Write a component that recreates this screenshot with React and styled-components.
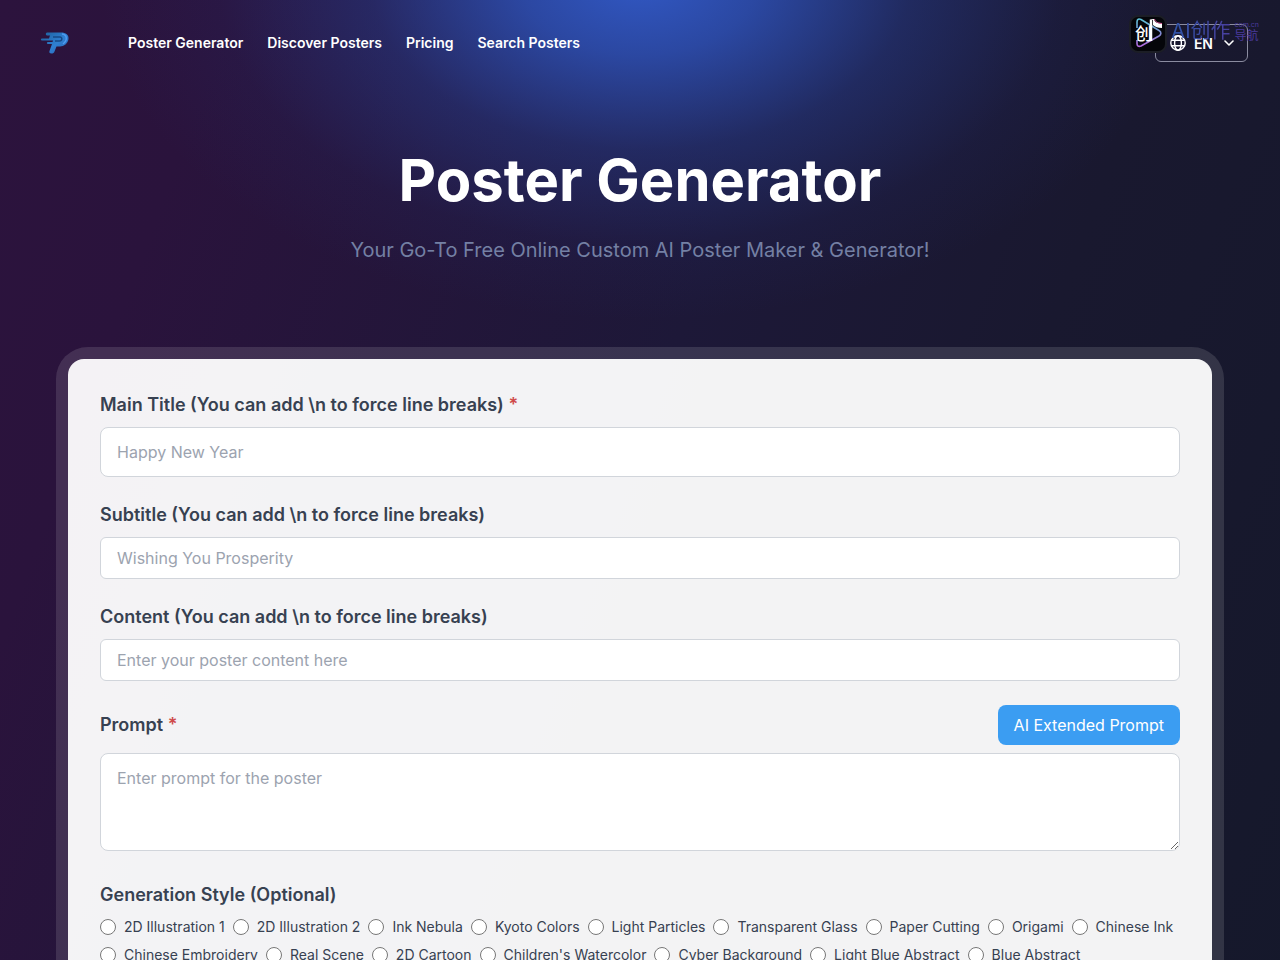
import React, { useState } from "react";
import styled, { createGlobalStyle } from "styled-components";

const navItems = ["Poster Generator", "Discover Posters", "Pricing", "Search Posters"];

const styleNames = [
  "2D Illustration 1",
  "2D Illustration 2",
  "Ink Nebula",
  "Kyoto Colors",
  "Light Particles",
  "Transparent Glass",
  "Paper Cutting",
  "Origami",
  "Chinese Ink",
  "Chinese Embroidery",
  "Real Scene",
  "2D Cartoon",
  "Children's Watercolor",
  "Cyber Background",
  "Light Blue Abstract",
  "Blue Abstract",
];

const Logo = () => (
  <svg width="30" height="24" viewBox="0 0 30 24" aria-hidden="true">
    <defs>
      <linearGradient id="logoFill" x1="0" y1="0" x2="1" y2="1">
        <stop offset="0" stopColor="#1d5f9c" />
        <stop offset="0.55" stopColor="#2f80d2" />
        <stop offset="1" stopColor="#2a5fb0" />
      </linearGradient>
    </defs>
    <path
      d="M7 1.500H21C26 1.500 29 4 28.500 8C28 12.500 24 15.500 20 15.500H16.500L14.500 20.500C14 22 13 22.500 11.500 22.500C9.500 22.500 9 21.500 9.500 20L12 13H8C6.500 13 6.500 11 8 11H12.500L13 9.500H2C0.500 9.500 0.500 7.500 2 7.500H9L10 4.500H7C5.500 4.500 5.500 1.500 7 1.500Z"
      fill="url(#logoFill)"
    />
    <path d="M13 6H20C22.500 6 22.500 10 19.500 10H15" fill="none" stroke="#174a86" strokeWidth="1.500" />
    <path d="M22 3C27 3.500 28 9 23 13" fill="none" stroke="#4f9cf0" strokeWidth="1.500" />
  </svg>
);

const GlobeIcon = () => (
  <svg width="16" height="16" viewBox="0 0 16 16" fill="none" stroke="#fff" strokeWidth="1.400" aria-hidden="true">
    <circle cx="8" cy="8" r="7.200" />
    <ellipse cx="8" cy="8" rx="3.400" ry="7.200" />
    <path d="M1.500 5.300H14.500M1.500 10.700H14.500" />
  </svg>
);

const ChevronIcon = () => (
  <svg width="10" height="6" viewBox="0 0 10 6" fill="none" stroke="#fff" strokeWidth="1.600" aria-hidden="true">
    <path d="M1 1L5 5L9 1" strokeLinecap="round" strokeLinejoin="round" />
  </svg>
);

const BadgeIcon = () => (
  <svg width="38" height="38" viewBox="0 0 38 38" aria-hidden="true">
    <defs>
      <linearGradient id="badgeLine" x1="0" y1="0" x2="0" y2="1">
        <stop offset="0" stopColor="#5fc4d8" />
        <stop offset="0.5" stopColor="#7c8bd0" />
        <stop offset="1" stopColor="#b56be0" />
      </linearGradient>
    </defs>
    <rect x="1" y="1" width="36" height="36" rx="8" fill="#05060a" stroke="#1c1e26" strokeWidth="2" />
    <path
      d="M8 13V7C8 4 10 3.500 12 4.500L30 15.500C32.500 17 32.500 19.500 30 21L12 31C9.500 32 8 31 8 28.500V25"
      fill="none"
      stroke="url(#badgeLine)"
      strokeWidth="1.600"
    />
    <text x="6" y="25" fontSize="17" fontWeight="500" fill="#fff" fontFamily="'Noto Sans CJK SC', sans-serif">
      创
    </text>
    <path d="M22 4.500V26" stroke="#fff" strokeWidth="2.500" />
    <path d="M21 4H25C25.500 7 28 8.500 33 8.500V13C29 13 26 12 24 10V5Z" fill="#fff" />
    <path d="M25.500 4C26 6.500 28 8 33 8.500" fill="none" stroke="#e05fa0" strokeWidth="1" />
  </svg>
);

const Field = ({ id, label, required, placeholder, tall }) => (
  <FieldGroup>
    <Label htmlFor={id}>
      {label} {required && <Required>*</Required>}
    </Label>
    <TextInput id={id} type="text" placeholder={placeholder} $tall={tall} />
  </FieldGroup>
);

const App = () => {
  const [selected, setSelected] = useState("");

  return (
    <Page>
      <GlobalStyle />
      <Header>
        <LogoLink href="#" aria-label="Home">
          <Logo />
        </LogoLink>
        <Nav>
          {navItems.map((item) => (
            <NavLink key={item} href="#">{item}</NavLink>
          ))}
        </Nav>
        <LangButton type="button">
          <GlobeIcon />
          EN
          <ChevronIcon />
        </LangButton>
        <SiteBadge href="#">
          <BadgeIcon />
          <BadgeName>AI创作</BadgeName>
          <BadgeSide>
            <BadgeDomain>com.cn</BadgeDomain>
            <BadgeNav>导航</BadgeNav>
          </BadgeSide>
        </SiteBadge>
      </Header>

      <Main>
        <Title>Poster Generator</Title>
        <Subtitle>Your Go-To Free Online Custom AI Poster Maker &amp; Generator!</Subtitle>

        <Frame>
          <Form onSubmit={(e) => e.preventDefault()}>
            <Field
              id="main-title"
              label="Main Title (You can add \n to force line breaks)"
              placeholder="Happy New Year"
              required
              tall
            />
            <Field
              id="subtitle"
              label="Subtitle (You can add \n to force line breaks)"
              placeholder="Wishing You Prosperity"
            />
            <Field
              id="content"
              label="Content (You can add \n to force line breaks)"
              placeholder="Enter your poster content here"
            />
            <FieldGroup>
              <PromptRow>
                <Label htmlFor="prompt">
                  Prompt <Required>*</Required>
                </Label>
                <ExtendButton type="button">AI Extended Prompt</ExtendButton>
              </PromptRow>
              <PromptArea id="prompt" placeholder="Enter prompt for the poster" />
            </FieldGroup>
            <StyleGroup>
              <Legend>Generation Style (Optional)</Legend>
              <Options>
                {styleNames.map((name) => (
                  <Option key={name}>
                    <Radio
                      type="radio"
                      name="style"
                      value={name}
                      checked={selected === name}
                      onChange={() => setSelected(name)}
                    />
                    {name}
                  </Option>
                ))}
              </Options>
            </StyleGroup>
          </Form>
        </Frame>
      </Main>
    </Page>
  );
};

const GlobalStyle = createGlobalStyle`
  * {
    box-sizing: border-box;
  }
  body {
    margin: 0;
    background: #17182d;
    font-family: Inter, "Noto Sans CJK SC", sans-serif;
  }
  input, textarea, button {
    font-family: inherit;
  }
`;

const Page = styled.div`
  min-height: 100vh;
  background:
    radial-gradient(ellipse 540px 340px at 50% -20px, #3158c4 0%, rgba(46, 84, 188, 0.8) 22%, rgba(40, 70, 160, 0.4) 50%, rgba(36, 54, 130, 0.12) 78%, rgba(34, 50, 120, 0) 100%),
    linear-gradient(110deg, #2c133d 0%, #2a133c 14%, #1d1838 48%, #19182f 70%, #15182b 100%);
`;

const Header = styled.header`
  position: relative;
  display: flex;
  align-items: center;
  padding: 24px 32px;
`;

const LogoLink = styled.a`
  display: flex;
  width: 96px;
  padding-left: 8px;
`;

const Nav = styled.nav`
  display: flex;
  flex: 1;
  gap: 24px;
`;

const NavLink = styled.a`
  color: #fff;
  font-size: 14px;
  font-weight: 600;
  line-height: 20px;
  text-decoration: none;
`;

const LangButton = styled.button`
  display: flex;
  align-items: center;
  gap: 8px;
  height: 38px;
  padding: 0 13px 0 14px;
  color: #fff;
  font-size: 14px;
  font-weight: 600;
  background: transparent;
  border: 1px solid #8b8ca0;
  border-radius: 6px;

  svg:last-child {
    margin-left: 3px;
  }
`;

/* floats over the language button */
const SiteBadge = styled.a`
  position: absolute;
  top: 15px;
  right: 21px;
  display: flex;
  gap: 4px;
  text-decoration: none;
  pointer-events: none;
`;

const BadgeName = styled.span`
  font-size: 20px;
  line-height: 32px;
  color: transparent;
  background: linear-gradient(90deg, #2f55a8, #4a3fa0);
  background-clip: text;
`;

const BadgeSide = styled.span`
  display: flex;
  flex-direction: column;
  padding-top: 6px;
  color: #4a3a9c;
`;

const BadgeDomain = styled.span`
  font-size: 7px;
  line-height: 8px;
`;

const BadgeNav = styled.span`
  font-size: 12px;
  line-height: 14px;
`;

const Main = styled.main`
  padding: 64px 56px;
`;

const Title = styled.h1`
  margin: 0;
  color: #fff;
  font-size: 58px;
  font-weight: 700;
  line-height: 60px;
  text-align: center;
`;

const Subtitle = styled.p`
  margin: 24px 0 0;
  color: #7480a4;
  font-size: 20px;
  line-height: 32px;
  text-align: center;
`;

const Frame = styled.div`
  margin-top: 81px;
  padding: 12px;
  background: rgba(255, 255, 255, 0.12);
  border-radius: 32px;
`;

const Form = styled.form`
  display: flex;
  flex-direction: column;
  gap: 24px;
  padding: 32px;
  background: rgba(255, 255, 255, 0.94);
  border-radius: 16px;
`;

const FieldGroup = styled.div`
  display: flex;
  flex-direction: column;
  gap: 8px;
`;

const Label = styled.label`
  color: #374151;
  font-size: 18px;
  font-weight: 600;
  line-height: 28px;
`;

const Required = styled.span`
  color: #cf4a4a;
`;

const TextInput = styled.input`
  width: 100%;
  height: ${(props) => (props.$tall ? "50px" : "42px")};
  padding: 0 16px;
  color: #374151;
  font-size: 16px;
  background: #fff;
  border: 1px solid #d1d5db;
  border-radius: ${(props) => (props.$tall ? "8px" : "6px")};

  &::placeholder {
    color: #9ca3af;
  }
`;

const PromptRow = styled.div`
  display: flex;
  align-items: center;
  justify-content: space-between;
`;

const ExtendButton = styled.button`
  height: 40px;
  padding: 0 16px;
  color: #fff;
  font-size: 16px;
  background: #3b9df2;
  border: none;
  border-radius: 8px;
`;

const PromptArea = styled.textarea`
  width: 100%;
  height: 98px;
  padding: 12px 16px;
  color: #374151;
  font-size: 16px;
  line-height: 24px;
  background: #fff;
  border: 1px solid #d1d5db;
  border-radius: 8px;
  resize: vertical;

  &::placeholder {
    color: #9ca3af;
  }
`;

const StyleGroup = styled.fieldset`
  min-width: 0;
  margin: 0;
  padding: 8px 0 0;
  border: none;
`;

const Legend = styled.legend`
  padding: 6px 0 0;
  color: #374151;
  font-size: 18px;
  font-weight: 600;
  line-height: 28px;
`;

const Options = styled.div`
  display: flex;
  flex-wrap: wrap;
  gap: 8px;
`;

const Option = styled.label`
  display: flex;
  align-items: center;
  gap: 8px;
  color: #374151;
  font-size: 14px;
  line-height: 20px;
`;

const Radio = styled.input`
  width: 16px;
  height: 16px;
  margin: 0;
`;

export default App;
